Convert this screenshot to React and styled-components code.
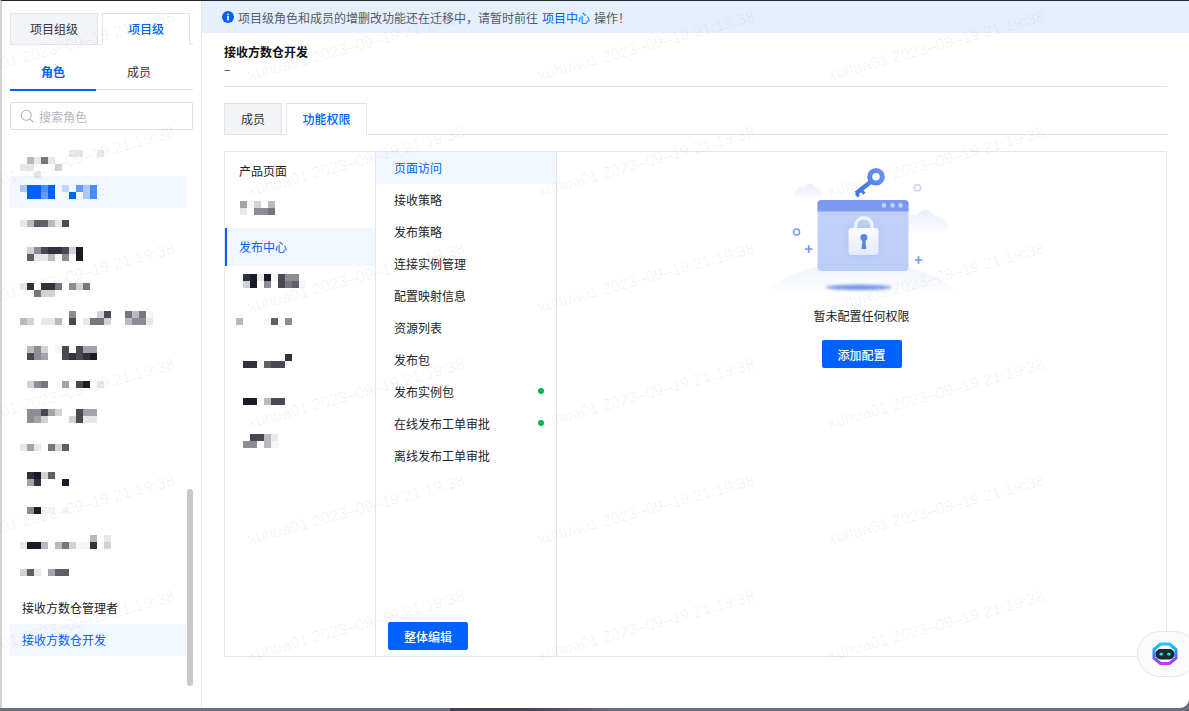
import React from 'react';
import styled, { createGlobalStyle } from 'styled-components';

const Global = createGlobalStyle`
  html, body { margin: 0; padding: 0; background: #686b78; }
  * { box-sizing: border-box; }
  body { font-family: "Noto Sans CJK SC", "Liberation Sans", sans-serif; font-size: 12px; color: #222; }
`;

const Stage = styled.div`
  position: relative; width: 1189px; height: 711px; overflow: hidden;
  background: linear-gradient(90deg, #6c6f7b 0 450px, #3d4355 450px 520px, #6c6f7b 620px);
`;
const Frame = styled.div`
  display: flex; width: 1189px; height: 708px; background: #fff;
  border-top: 1px solid #26272b; border-left: 2px solid #d2d3d6;
  border-bottom-right-radius: 9px; overflow: hidden;
`;
const Sidebar = styled.aside`
  flex: none; width: 200px; padding: 12px 8px 0; border-right: 1px solid #e4e6ec; position: relative;
`;
const TabBar = styled.div`
  display: flex; gap: ${p => p.$gap}px; height: ${p => p.$h}px; margin-top: ${p => p.$mt || 0}px;
  border-bottom: 1px solid #e0e3eb;
`;
const BoxTab = styled.div`
  width: ${p => p.$w}px; margin-bottom: -1px; display: flex; align-items: center; justify-content: center;
  border: 1px solid #e0e3eb; line-height: 18px;
  background: ${p => (p.$active ? '#fff' : '#f3f4f7')};
  border-bottom-color: ${p => (p.$active ? '#fff' : '#e0e3eb')};
  color: ${p => (p.$active ? '#0061ff' : '#333')};
  font-weight: ${p => (p.$active ? 500 : 400)};
`;
const SubTabs = styled.div`
  display: flex; height: 45px; border-bottom: 1px solid #e0e3eb;
`;
const SubTab = styled.div`
  width: 86px; height: 46px; padding-top: 18px; text-align: center; line-height: 18px;
  color: ${p => (p.$active ? '#0061ff' : '#333')};
  font-weight: ${p => (p.$active ? 600 : 400)};
  border-bottom: 2px solid ${p => (p.$active ? '#0061ff' : 'transparent')};
`;
const Search = styled.div`
  display: flex; align-items: center; gap: 5px; height: 28px; margin-top: 12px; padding-left: 9px;
  border: 1px solid #dcdfe6; border-radius: 2px; color: #b4b7c0;
`;
const RoleList = styled.div` margin-top: 14px; `;
const RoleItem = styled.div`
  height: 32px; width: 177px; padding: 0 0 2px ${p => (p.$text ? 12 : 0)}px; display: flex; align-items: center;
  background: ${p => (p.$active ? '#f1f6ff' : 'transparent')};
  color: ${p => (p.$active ? '#0061ff' : '#222')};
`;
const MosaicBox = styled.svg`
  display: block; width: 100%; height: 32px; overflow: visible; align-self: flex-start; flex: none;
`;
const Thumb = styled.div`
  position: absolute; left: 185px; top: 488px; width: 6px; height: 197px; border-radius: 3px; background: #c9c9c9;
`;
const Main = styled.main` flex: 1; min-width: 0; display: flex; flex-direction: column; `;
const Notice = styled.div`
  flex: none; height: 32px; padding-left: 20px; display: flex; align-items: center; gap: 4px;
  background: #e5f0fc; color: #555a66;
`;
const NoticeLink = styled.span` color: #0061ff; margin: 0 4px; `;
const Content = styled.div` flex: 1; padding: 10px 22px 0; `;
const Head = styled.div` padding-bottom: 7px; border-bottom: 1px solid #e3e5ec; line-height: 18px; `;
const Title = styled.div` font-weight: 600; color: #111; `;
const Dash = styled.div` color: #333; margin-top: -1px; height: 19px; `;
const Panel = styled.div`
  display: flex; height: 506px; margin-top: 16px; border: 1px solid #e3e5ef;
`;
const ProductCol = styled.div` flex: none; width: 151px; border-right: 1px solid #e3e5ef; `;
const ProductItem = styled.div`
  height: 38px; padding: 0 0 2px ${p => (p.$text ? 14 : 0)}px; display: flex; align-items: center;
  background: ${p => (p.$active ? '#f1f6ff' : 'transparent')};
  box-shadow: ${p => (p.$active ? 'inset 2px 0 0 #0061ff' : 'none')};
  color: ${p => (p.$active ? '#0061ff' : '#222')};
`;
const FeatureCol = styled.div`
  flex: none; width: 181px; border-right: 1px solid #e3e5ef; display: flex; flex-direction: column;
`;
const FeatureItem = styled.div`
  height: 32px; padding: 0 12px 2px 18px; display: flex; align-items: center; justify-content: space-between;
  background: ${p => (p.$active ? '#f1f6ff' : 'transparent')};
  color: ${p => (p.$active ? '#0061ff' : '#222')};
`;
const Dot = styled.i` width: 6px; height: 6px; border-radius: 50%; background: #00b25c; `;
const PrimaryButton = styled.button`
  width: 80px; height: 28px; border: 0; border-radius: 2px; background: #0061ff; color: #fff; padding: 0;
  font: 500 12px "Noto Sans CJK SC", sans-serif;
`;
const FeatureFoot = styled.div` margin-top: auto; padding: 0 0 6px 12px; `;
const EmptyCol = styled.div` flex: 1; display: flex; flex-direction: column; align-items: center; `;
const EmptyArt = styled.svg` display: block; width: 242px; height: 148px; `;
const EmptyText = styled.div` margin: 7px 0 15px; line-height: 18px; color: #222; `;
const Bubble = styled.div`
  position: absolute; left: 1137px; top: 631px; width: 60px; height: 46px; padding-left: 13px;
  display: flex; align-items: center; background: #fbfbfc; border: 1px solid #e3e6f0; border-radius: 23px;
`;
const Marks = styled.div`
  position: absolute; left: -42px; top: 17px; display: grid; grid-template-columns: repeat(4, 290px);
  grid-auto-rows: 116px; pointer-events: none;
`;
const Mark = styled.div`
  align-self: center; white-space: nowrap; transform: rotate(-15.5deg); transform-origin: 0 50%;
  font: 16.2px/20px "Liberation Sans", sans-serif; color: rgba(20, 25, 40, 0.058);
`;

const ALPHA = { '.': 0.04, a: 1 };
const Mosaic = ({ rows, top = 0, left = 0, color = '#191c28' }) => (
  <MosaicBox aria-hidden="true" shapeRendering="crispEdges">
    {rows.flatMap((row, r) =>
      row.split('').map((c, i) =>
        c === '0' ? null : (
          <rect key={`${r}-${i}`} x={left + i * 7} y={top + r * 7} width="7" height="7" fill={color}
            fillOpacity={ALPHA[c] ?? Number(c) / 10} />
        )
      )
    )}
  </MosaicBox>
);

const roles = [
  { top: 6, rows: ['000000011001', '03161', '110002', '001'] },
  { top: 9, rows: ['3aa7a020637', '0aa6a00a037'], blue: true },
  { top: 12, rows: ['1377318'] },
  { top: 7, rows: ['02589982a', '07113.50a'] },
  { top: 11, rows: ['1909960526', '00622'] },
  { top: 7, rows: ['000000050002800636.', '3201130801662003551'] },
  { top: 10, rows: ['03520.80844', '0854008989a'] },
  { top: 13, rows: ['025600408a01'] },
  { top: 9, rows: ['05584200844', '05420002811'] },
  { top: 12, rows: ['1410627'] },
  { top: 8, rows: ['09a27', '049000a'] },
  { top: 11, rows: ['05a..0.'] },
  { top: 7, rows: ['0000000000301', '1aa30362..902'] },
  { top: 9, rows: ['2710477'] },
];

const products = [
  { text: '产品页面' },
  { top: 11, left: 15, rows: ['4.203', '10556'] },
  { text: '发布中心', active: true },
  { top: 8, left: 11, rows: ['09a1a.855', '02a050867.'] },
  { top: 14, left: 11, rows: ['3000.705'] },
  { top: 12, left: 11, rows: ['00000009', '0990788'] },
  { top: 18, left: 11, rows: ['0aa0388'] },
  { top: 16, left: 11, rows: ['008831', '05503.'] },
];

const features = [
  { t: '页面访问', active: true }, { t: '接收策略' }, { t: '发布策略' }, { t: '连接实例管理' },
  { t: '配置映射信息' }, { t: '资源列表' }, { t: '发布包' }, { t: '发布实例包', dot: true },
  { t: '在线发布工单审批', dot: true }, { t: '离线发布工单审批' },
];

const SearchIcon = () => (
  <svg width="14" height="14" viewBox="0 0 14 14" fill="none" stroke="#b4b7c0" strokeWidth="1.1">
    <circle cx="6.300" cy="6.300" r="5" /><path d="M10 10l3 3" strokeLinecap="round" />
  </svg>
);
const InfoIcon = () => (
  <svg width="12" height="12" viewBox="0 0 12 12">
    <circle cx="6" cy="6" r="6" fill="#0061ff" />
    <rect x="5.200" y="5" width="1.600" height="4.400" fill="#fff" /><rect x="5.200" y="2.600" width="1.600" height="1.600" fill="#fff" />
  </svg>
);
const Cloud = ({ d }) => <path d={d} fill="url(#cloud)" />;
const Illustration = () => (
  <EmptyArt viewBox="740.5 152 242 148" aria-hidden="true">
    <defs>
      <linearGradient id="cloud" x1="0" y1="0" x2="0" y2="1"><stop offset="0" stopColor="#e9eefb" /><stop offset="1" stopColor="#fbfcff" /></linearGradient>
      <linearGradient id="hill" gradientUnits="userSpaceOnUse" x1="0" y1="262" x2="0" y2="297"><stop offset="0" stopColor="#f0f3fd" /><stop offset="1" stopColor="#fff" /></linearGradient>
      <linearGradient id="pane" x1="0" y1="0" x2="0" y2="1"><stop offset="0" stopColor="#c3d1f9" /><stop offset="1" stopColor="#bccdf9" /></linearGradient>
      <linearGradient id="lock" x1="0" y1="0" x2="0" y2="1"><stop offset="0" stopColor="#fbfcff" /><stop offset="1" stopColor="#e3eafc" /></linearGradient>
      <linearGradient id="key" gradientUnits="userSpaceOnUse" x1="884" y1="168" x2="852" y2="195"><stop offset="0" stopColor="#6f95f6" /><stop offset="1" stopColor="#3f6fe6" /></linearGradient>
      <filter id="soft" x="-30%" y="-120%" width="160%" height="340%"><feGaussianBlur stdDeviation="1.600" /></filter>
      <filter id="glow" x="-30%" y="-30%" width="160%" height="160%"><feGaussianBlur stdDeviation="4" /></filter>
    </defs>
    <ellipse cx="861" cy="309" rx="102" ry="47" fill="url(#hill)" />
    <Cloud d="M795 198c-3 0-3-7 2-8 1-4 6-4 8-3 2-4 8-4 10 1 5 0 8 4 7 10z" />
    <Cloud d="M908 232v-16c3-2 7-1 9-1 2-5 8-6 12-4 3 1 4 3 5 5 7 0 14 6 14 12 0 2-2 4-4 4z" />
    <rect x="817" y="200" width="91" height="71" rx="4" fill="url(#pane)" />
    <path d="M821 200h83a4 4 0 0 1 4 4v7.400h-91V204a4 4 0 0 1 4-4z" fill="#7d98ef" />
    <circle cx="883.400" cy="205.400" r="2.300" fill="#c3d1fa" /><circle cx="892" cy="205.400" r="2.300" fill="#c3d1fa" /><circle cx="900" cy="205.400" r="2.300" fill="#c3d1fa" />
    <rect x="848" y="228" width="30" height="27" rx="3" fill="#a9bff6" filter="url(#glow)" />
    <path d="M855 230v-4a8.300 8.300 0 0 1 16.600 0v4" fill="none" stroke="#eef2fe" strokeWidth="3.400" />
    <rect x="848" y="228" width="30" height="27" rx="3" fill="url(#lock)" />
    <circle cx="863.400" cy="237.400" r="3.500" fill="#5f84e8" /><path d="M862 239h2.800l1 10h-4.800z" fill="#5f84e8" />
    <g fill="none" stroke="url(#key)">
      <circle cx="875.500" cy="176.800" r="6.300" strokeWidth="5" />
      <path d="M870 182L855.500 193.500" strokeWidth="4.400" />
      <path d="M860.500 190l3.500 3.800M855.500 193.500l2.800 3" strokeWidth="3" />
    </g>
    <circle cx="917" cy="187.700" r="3.100" fill="none" stroke="#cbd5f8" strokeWidth="1.600" />
    <circle cx="796" cy="232" r="3" fill="none" stroke="#7d9df0" strokeWidth="1.600" />
    <path d="M804.500 249h7.500M808.200 245.200v7.500M914.200 260h7.600M918 256.200v7.600" stroke="#6c93ee" strokeWidth="1.700" />
    <ellipse cx="858.300" cy="287.300" rx="33" ry="2.600" fill="#6f93ee" filter="url(#soft)" />
  </EmptyArt>
);
const RobotIcon = () => (
  <svg width="28" height="24" viewBox="0 0 28 24">
    <defs>
      <linearGradient id="bot" gradientUnits="userSpaceOnUse" x1="0" y1="0" x2="0" y2="24">
        <stop offset="0" stopColor="#12d8ff" /><stop offset="0.5" stopColor="#2f86ff" /><stop offset="0.72" stopColor="#7a50ff" /><stop offset="1" stopColor="#e42cf0" />
      </linearGradient>
    </defs>
    <path d="M9.500 2h9l6.500 5.500v8.500l-6.500 5.500h-9L3 16V7.500z" fill="#fff" stroke="url(#bot)" strokeWidth="3" strokeLinejoin="round" />
    <rect x="4.500" y="7" width="19" height="10.500" rx="5" fill="#1c2a36" />
    <rect x="8.500" y="10.800" width="3.400" height="2.800" rx="1.300" fill="#1ee4e6" />
    <rect x="16.200" y="10.800" width="3.400" height="2.800" rx="1.300" fill="#1ee4e6" />
  </svg>
);

export default function App() {
  return (
    <Stage>
      <Global />
      <Frame>
        <Sidebar>
          <TabBar $gap={4} $h={32}>
            <BoxTab $w={88}>项目组级</BoxTab>
            <BoxTab $w={88} $active>项目级</BoxTab>
          </TabBar>
          <SubTabs>
            <SubTab $active>角色</SubTab>
            <SubTab>成员</SubTab>
          </SubTabs>
          <Search><SearchIcon />搜索角色</Search>
          <RoleList>
            {roles.map((r, i) => (
              <RoleItem key={i} $active={r.blue}>
                <Mosaic rows={r.rows} top={r.top} left={10} color={r.blue ? '#0061ff' : undefined} />
              </RoleItem>
            ))}
            <RoleItem $text>接收方数仓管理者</RoleItem>
            <RoleItem $text $active>接收方数仓开发</RoleItem>
          </RoleList>
          <Thumb />
        </Sidebar>
        <Main>
          <Notice>
            <InfoIcon />
            <span>项目级角色和成员的增删改功能还在迁移中，请暂时前往<NoticeLink>项目中心</NoticeLink>操作！</span>
          </Notice>
          <Content>
            <Head>
              <Title>接收方数仓开发</Title>
              <Dash>–</Dash>
            </Head>
            <TabBar $gap={4} $h={32} $mt={16}>
              <BoxTab $w={58}>成员</BoxTab>
              <BoxTab $w={81} $active>功能权限</BoxTab>
            </TabBar>
            <Panel>
              <ProductCol>
                {products.map((p, i) =>
                  p.text ? (
                    <ProductItem key={i} $text $active={p.active}>{p.text}</ProductItem>
                  ) : (
                    <ProductItem key={i}><Mosaic rows={p.rows} top={p.top} left={p.left} /></ProductItem>
                  )
                )}
              </ProductCol>
              <FeatureCol>
                {features.map(f => (
                  <FeatureItem key={f.t} $active={f.active}>{f.t}{f.dot && <Dot />}</FeatureItem>
                ))}
                <FeatureFoot><PrimaryButton>整体编辑</PrimaryButton></FeatureFoot>
              </FeatureCol>
              <EmptyCol>
                <Illustration />
                <EmptyText>暂未配置任何权限</EmptyText>
                <PrimaryButton>添加配置</PrimaryButton>
              </EmptyCol>
            </Panel>
          </Content>
        </Main>
      </Frame>
      <Bubble><RobotIcon /></Bubble>
      <Marks aria-hidden="true">
        {Array.from({ length: 24 }, (_, i) => <Mark key={i}>xuhua01 2023–09–19 21:19:38</Mark>)}
      </Marks>
    </Stage>
  );
}
